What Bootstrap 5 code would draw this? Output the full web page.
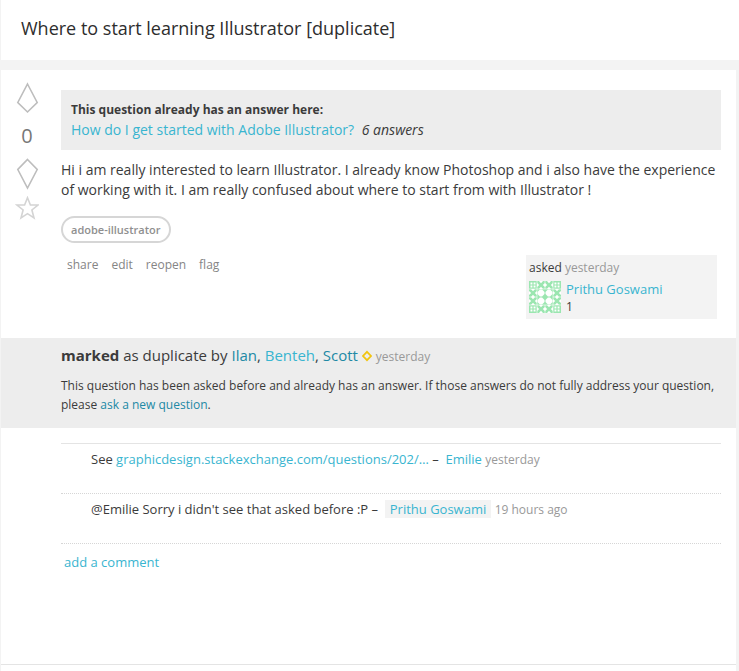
<!DOCTYPE html>
<html lang="en">
<head>
<meta charset="utf-8">
<meta name="viewport" content="width=device-width, initial-scale=1">
<title>Where to start learning Illustrator [duplicate]</title>
<link href="https://cdn.jsdelivr.net/npm/bootstrap@5.3.0/dist/css/bootstrap.min.css" rel="stylesheet">
<style>
body { background: #f3f3f3; color: #3b3b3b; font: 14px/20px "Open Sans", sans-serif; }
a { color: #39b5d0; text-decoration: none; }
a:hover { text-decoration: underline; }
.site-title { background: #fff; margin-left: 1px; padding: 16px 20px 20px; }
.site-title h1 { font-size: 18px; line-height: 24px; font-weight: 400; color: #2d2d2d; }
.question-panel { background: #fff; margin: 10px 3px 0 1px; min-height: calc(100vh - 70px); }
.question-row { padding: 12px 15px 0 10px; }
.vote-column { width: 32px; margin-right: 18px; }
.vote-column button { line-height: 0; }
.vote-count { font-size: 20px; line-height: 24px; color: #777; margin: 10px 0; }
.star-button { margin-top: 6px; }
.post-column { min-width: 0; padding-top: 8px; }
.duplicate-note { background: #ededed; padding: 10px; margin-bottom: 10px; }
.duplicate-note strong { font-size: 12px; }
.post-tag { border: 2px solid #d6d6d6; border-radius: 14px; color: #8f8f8f; font-size: 11px; line-height: 15px; font-weight: 600; padding: 4px 8px; }
.post-menu { padding: 0 6px; gap: 13px; font-size: 12px; }
.muted-time { color: #999; }
.post-menu a { color: #858585; }
.owner-card { background: #f3f3f3; width: 191px; padding: 3px; margin-right: 4px; font-size: 12px; }
.owner-card .owner-name { font-size: 13px; line-height: 17px; }
.owner-card .reputation { line-height: 17px; }
.owner-card .owner-row { padding: 3px 0 1px; gap: 5px; }
.closed-notice { background: #ededed; margin-top: 19px; padding: 7px 20px 14px 60px; font-size: 12px; line-height: 19px; }
.closed-notice h2 { font-size: 15px; line-height: 20px; font-weight: 400; margin-bottom: 9px; }
.closed-notice h2 svg { margin-bottom: 2px; }
.closed-notice .muted-time { font-size: 12px; }
.strong-link { color: #2189a5; }
.comment-area { margin: 15px 15px 0 60px; border-top: 1px solid #e4e4e4; font-size: 13px; }
.comment-area li { min-height: 50px; padding: 5px 0 0 30px; border-bottom: 1px dotted #d6d6d6; }
.comment-area .muted-time { font-size: 12px; }
.owner-mark { background: #f3f3f3; padding: 0 5px; }
.add-comment { padding: 8px 3px 0; }
.panel-rule { border-top: 1px solid #e4e4e4; padding-top: 6px; }
</style>
</head>
<body>
<header class="site-title"><h1 class="mb-0">Where to start learning Illustrator [duplicate]</h1></header>
<main class="question-panel d-flex flex-column">
  <article class="question-row d-flex">
    <div class="vote-column d-flex flex-column align-items-center flex-shrink-0">
      <button type="button" class="border-0 bg-transparent p-0" aria-label="Vote up"><svg width="24" height="32" viewBox="0 0 24 32" fill="none" stroke="#bdbdbd" stroke-width="1.6"><path d="M12.5 2 22.2 20.5 12.5 30 2.8 20.5Z"/></svg></button>
      <span class="vote-count">0</span>
      <button type="button" class="border-0 bg-transparent p-0" aria-label="Vote down"><svg width="24" height="32" viewBox="0 0 24 32" fill="none" stroke="#bdbdbd" stroke-width="1.6"><path d="M12.5 1.5 22.2 11.5 12.5 30 2.8 11.5Z"/></svg></button>
      <button type="button" class="star-button border-0 bg-transparent p-0" aria-label="Favorite"><svg width="24" height="24" viewBox="0 0 24 24" fill="none" stroke="#d4d4d4" stroke-width="1.6"><path d="M12.5 1.7 15.4 9H23L16.9 14 19 22 12.5 17.6 6 22 8.1 14 2 9H9.6Z"/></svg></button>
    </div>
    <div class="post-column flex-grow-1">
      <div class="duplicate-note"><strong class="d-block">This question already has an answer here:</strong><a href="#">How do I get started with Adobe Illustrator?</a> <em class="ms-1">6 answers</em></div>
      <p class="mb-3">Hi i am really interested to learn Illustrator. I already know Photoshop and i also have the experience of working with it. I am really confused about where to start from with Illustrator !</p>
      <div class="d-flex"><a href="#" class="post-tag">adobe-illustrator</a></div>
      <div class="d-flex justify-content-between align-items-start pt-2 mt-1">
        <nav class="post-menu d-flex" aria-label="Question actions"><a href="#">share</a><a href="#">edit</a><a href="#">reopen</a><a href="#">flag</a></nav>
        <div class="owner-card">
          <div>asked <span class="muted-time">yesterday</span></div>
          <div class="owner-row d-flex">
            <svg class="flex-shrink-0" width="32" height="32" viewBox="0 0 32 32" role="img" aria-label="Prithu Goswami avatar">
              <defs>
                <g id="corner"><path fill="#9be6b0" d="M0 0H8V8H0Z"/><path fill="#fff" d="M1.5 1.5H3.4V3.4H1.5ZM4.6 1.5H6.5V3.4H4.6ZM1.5 4.6H3.4V6.5H1.5ZM4.6 4.6H6.5V6.5H4.6Z"/></g>
                <g id="cross"><path fill="#9be6b0" d="M0 0H8V8H0Z"/><path fill="#fff" d="M2 0H6L4 2.2ZM8 2V6L5.8 4ZM6 8H2L4 5.8ZM0 6V2L2.2 4Z"/></g>
                <g id="ring"><path fill="#9be6b0" d="M0 0H8V8H0Z"/><path fill="#fff" d="M2.9 .5H5.1L7.5 2.9V5.1L5.1 7.5H2.9L.5 5.1V2.9Z"/></g>
              </defs>
              <use href="#corner"/><use href="#corner" x="24"/><use href="#corner" y="24"/><use href="#corner" x="24" y="24"/>
              <use href="#cross" x="8"/><use href="#cross" x="16"/><use href="#cross" y="8"/><use href="#cross" y="16"/><use href="#cross" x="24" y="8"/><use href="#cross" x="24" y="16"/><use href="#cross" x="8" y="24"/><use href="#cross" x="16" y="24"/>
              <use href="#ring" x="8" y="8"/><use href="#ring" x="16" y="8"/><use href="#ring" x="8" y="16"/><use href="#ring" x="16" y="16"/>
              <path fill="none" stroke="#fff" stroke-width=".6" d="M8 0V32M24 0V32M0 8H32M0 24H32M16 0V8M16 24V32M0 16H8M24 16H32"/>
            </svg>
            <div><a href="#" class="owner-name d-block">Prithu Goswami</a><div class="reputation">1</div></div>
          </div>
        </div>
      </div>
    </div>
  </article>
  <section class="closed-notice">
    <h2><strong>marked</strong> as duplicate by <a href="#" class="strong-link">Ilan</a>, <a href="#">Benteh</a>, <a href="#" class="strong-link">Scott</a> <svg width="10" height="12" viewBox="0 0 10 12" fill="none" stroke="#f2c40f" stroke-width="1.8" role="img" aria-label="Moderator"><path d="M5 1.8 9 6 5 10.2 1 6Z"/></svg> <span class="muted-time">yesterday</span></h2>
    <p class="mb-0">This question has been asked before and already has an answer. If those answers do not fully address your question, please <a href="#" class="strong-link">ask a new question</a>.</p>
  </section>
  <section class="comment-area">
    <ul class="list-unstyled mb-0">
      <li>See <a href="#">graphicdesign.stackexchange.com/questions/202/…</a> –&nbsp; <a href="#">Emilie</a> <span class="muted-time">yesterday</span></li>
      <li>@Emilie Sorry i didn't see that asked before :P –&nbsp; <a href="#" class="owner-mark">Prithu Goswami</a> <span class="muted-time">19 hours ago</span></li>
    </ul>
    <div class="add-comment"><a href="#">add a comment</a></div>
  </section>
  <div class="panel-rule mt-auto"></div>
</main>
<script src="https://cdn.jsdelivr.net/npm/bootstrap@5.3.0/dist/js/bootstrap.bundle.min.js"></script>
</body>
</html>
